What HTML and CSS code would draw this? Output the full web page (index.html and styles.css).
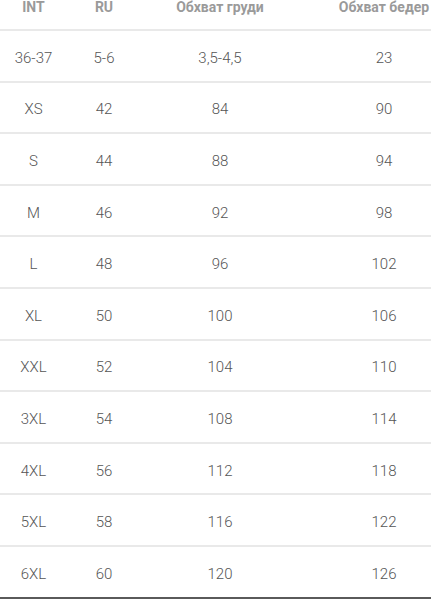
FILE: index.html
```html
<!DOCTYPE html>
<html lang="ru">
<head>
<meta charset="utf-8">
<title>Размеры</title>
<link rel="stylesheet" href="styles.css">
</head>
<body>
<div class="table">
  <div class="row head">
    <div class="cell">INT</div>
    <div class="cell">RU</div>
    <div class="cell">Обхват груди</div>
    <div class="cell">Обхват бедер</div>
  </div>
  <div class="row"><div class="cell">36-37</div><div class="cell">5-6</div><div class="cell">3,5-4,5</div><div class="cell">23</div></div>
  <div class="row"><div class="cell">XS</div><div class="cell">42</div><div class="cell">84</div><div class="cell">90</div></div>
  <div class="row"><div class="cell">S</div><div class="cell">44</div><div class="cell">88</div><div class="cell">94</div></div>
  <div class="row"><div class="cell">M</div><div class="cell">46</div><div class="cell">92</div><div class="cell">98</div></div>
  <div class="row"><div class="cell">L</div><div class="cell">48</div><div class="cell">96</div><div class="cell">102</div></div>
  <div class="row"><div class="cell">XL</div><div class="cell">50</div><div class="cell">100</div><div class="cell">106</div></div>
  <div class="row"><div class="cell">XXL</div><div class="cell">52</div><div class="cell">104</div><div class="cell">110</div></div>
  <div class="row"><div class="cell">3XL</div><div class="cell">54</div><div class="cell">108</div><div class="cell">114</div></div>
  <div class="row"><div class="cell">4XL</div><div class="cell">56</div><div class="cell">112</div><div class="cell">118</div></div>
  <div class="row"><div class="cell">5XL</div><div class="cell">58</div><div class="cell">116</div><div class="cell">122</div></div>
  <div class="row last"><div class="cell">6XL</div><div class="cell">60</div><div class="cell">120</div><div class="cell">126</div></div>
</div>
</body>
</html>
```

FILE: styles.css
```css
html, body {
  margin: 0;
  padding: 0;
  background: #ffffff;
}
body {
  font-family: Roboto, "Liberation Sans", sans-serif;
  color: #555555;
}
.table {
  width: 431px;
}
.row {
  display: grid;
  grid-template-columns: 67px 74px 158px 132px;
  align-items: center;
  height: 51.6px;
  box-sizing: border-box;
  padding-top: 4px;
  border-bottom: 2px solid #e9e9e9;
  font-weight: 300;
  font-size: 15px;
}
.row.head {
  height: 31px;
  padding-top: 0;
  align-items: start;
  font-weight: 700;
  font-size: 14px;
  line-height: 15px;
  color: #9a9a9a;
}
.row.last {
  border-bottom-color: #5a5a5a;
}
.cell {
  text-align: center;
  white-space: nowrap;
}
.cell:last-child {
  padding-left: 38px;
}
```
